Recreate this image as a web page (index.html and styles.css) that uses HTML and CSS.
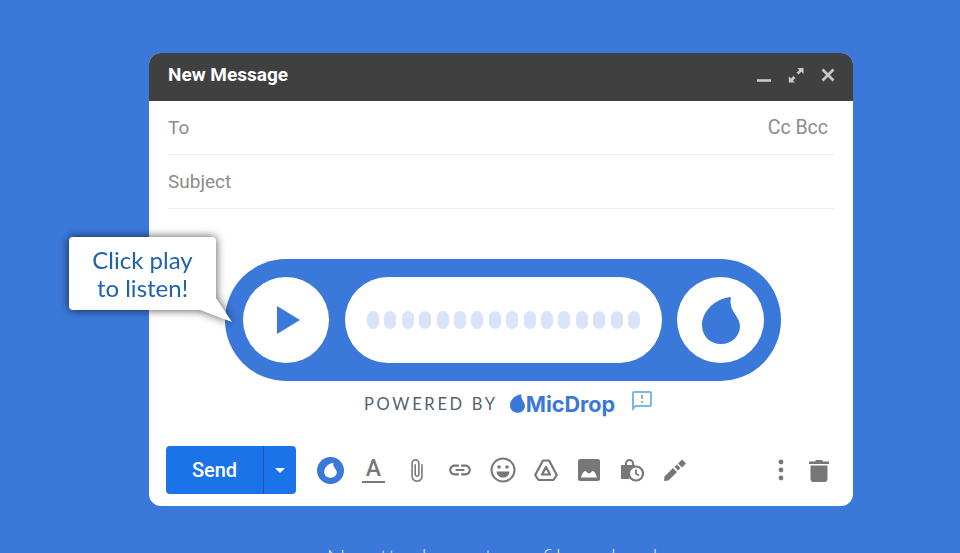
FILE: index.html
```html
<!DOCTYPE html>
<html lang="en">
<head>
  <meta charset="UTF-8" />
  <meta name="viewport" content="width=device-width, initial-scale=1.0"/>
  <title>MicDrop voice message</title>
  <link rel="stylesheet" href="styles.css">
</head>
<body>
  <div class="compose">
    <div class="compose-header">
      <strong class="compose-title">New Message</strong>
      <div class="window-buttons">
        <svg class="window-icon" viewBox="0 0 16 16"><path d="M1 13.500h14" stroke-width="2.600"/></svg>
        <svg class="window-icon" viewBox="0 0 16 16"><path class="filled" d="M9.500 1H15.500V7L13.300 4.800 10.500 7.600 8.500 5.600 11.300 3.200zM7 15.500H.8V9.300L3 11.500 5.500 9 7.500 11 5 13.500z"/></svg>
        <svg class="window-icon" viewBox="0 0 16 16"><path d="M2.500 2.500L13.500 13.500M13.500 2.500L2.500 13.500" stroke-width="2.600"/></svg>
      </div>
    </div>

    <div class="field">
      <span>To</span>
      <span class="field-right">Cc Bcc</span>
    </div>
    <div class="field">
      <span>Subject</span>
    </div>

    <div class="player">
      <div class="bubble">
        Click play<br>to listen!
        <svg class="bubble-tail" viewBox="0 0 40 32"><polygon points="4,16 20,4 36,28"/></svg>
      </div>
      <div class="player-circle">
        <svg class="play-icon" viewBox="0 0 23 28"><polygon points="0,0 23,14 0,28"/></svg>
      </div>
      <div class="wave">
        <i></i><i></i><i></i><i></i><i></i><i></i><i></i><i></i>
        <i></i><i></i><i></i><i></i><i></i><i></i><i></i><i></i>
      </div>
      <div class="player-circle player-circle-end">
        <svg class="drop-icon" viewBox="0 0 38 47"><path d="M29 0C11 2 0 16 0 28C0 39 8 47 19 47C30 47 38 39 38 29C38 19 26 14 29 0Z"/></svg>
      </div>
    </div>

    <div class="powered">
      <span class="powered-text">POWERED BY</span>
      <span class="brand">
        <svg class="brand-drop" viewBox="0 0 38 47"><path d="M29 0C11 2 0 16 0 28C0 39 8 47 19 47C30 47 38 39 38 29C38 19 26 14 29 0Z"/></svg>
        MicDrop
      </span>
      <svg class="feedback" viewBox="0 0 24 24"><path d="M20 2H4c-1.100 0-2 .9-2 2v18l4-4h14c1.100 0 2-.9 2-2V4c0-1.100-.9-2-2-2zm0 14H5.170L4 17.170V4h16v12zM11 12h2v2h-2zm0-6h2v4h-2z"/></svg>
    </div>

    <div class="toolbar">
      <div class="send-button">
        <span class="send-label">Send</span>
        <span class="send-more"><i class="caret"></i></span>
      </div>
      <div class="tools">
        <span class="tool">
          <svg class="icon-drop" viewBox="0 0 28 28"><circle cx="14" cy="14" r="14" fill="#3a78d9"/><path fill="#fff" d="M17 6C11 7 7.500 11.500 7.500 15.500C7.500 19 10.200 21.500 14 21.500C17.800 21.500 20.500 19 20.500 15.800C20.500 12.500 16 11 17 6Z"/></svg>
        </span>
        <span class="tool"><span class="text-color">A</span></span>
        <span class="tool">
          <svg viewBox="0 0 24 24"><path d="M16.500 6v11.500c0 2.210-1.790 4-4 4s-4-1.790-4-4V5c0-1.380 1.120-2.500 2.500-2.500s2.500 1.120 2.500 2.500v10.500c0 .55-.45 1-1 1s-1-.45-1-1V6H10v9.500c0 1.380 1.120 2.500 2.500 2.500s2.500-1.120 2.500-2.500V5c0-2.210-1.790-4-4-4S7 2.790 7 5v12.500c0 3.040 2.460 5.500 5.500 5.500s5.500-2.460 5.500-5.500V6h-1.500z"/></svg>
        </span>
        <span class="tool">
          <svg class="icon-wide" viewBox="0 0 24 24"><path d="M3.900 12c0-1.710 1.390-3.100 3.100-3.100h4V7H7c-2.760 0-5 2.240-5 5s2.240 5 5 5h4v-1.900H7c-1.710 0-3.100-1.390-3.100-3.100zM8 13h8v-2H8v2zm9-6h-4v1.900h4c1.710 0 3.100 1.390 3.100 3.100s-1.390 3.100-3.100 3.100h-4V17h4c2.760 0 5-2.240 5-5s-2.240-5-5-5z"/></svg>
        </span>
        <span class="tool">
          <svg class="icon-wide" viewBox="0 0 26 26"><circle cx="13" cy="13" r="11.500" class="line" stroke-width="2"/><circle cx="9" cy="10" r="1.800"/><circle cx="17" cy="10" r="1.800"/><path d="M6.500 14.500H19.500C19 18.500 16.500 20.500 13 20.500C9.500 20.500 7 18.500 6.500 14.500Z"/></svg>
        </span>
        <span class="tool">
          <svg class="icon-mid" viewBox="0 0 24 24"><polygon class="line" stroke-width="2.200" points="9,2.500 15,2.500 22.800,17 19.500,22 4.500,22 1.200,17"/><polygon class="line" stroke-width="2.200" points="12,9 16,16.500 8,16.500"/></svg>
        </span>
        <span class="tool">
          <svg class="icon-mid" viewBox="0 0 24 24"><path fill-rule="evenodd" d="M3 1H21C22 1 23 2 23 3V21C23 22 22 23 21 23H3C2 23 1 22 1 21V3C1 2 2 1 3 1ZM4 19.500H20C19.500 17 18 14 16 13C14.500 13 14 15 12 15.500C10 15 9.500 13 8 13C6 14 4.500 17 4 19.500Z"/></svg>
        </span>
        <span class="tool">
          <svg class="icon-mid" viewBox="0 0 24 24"><path fill-rule="evenodd" d="M5 7V5.500C5 2.800 7 1 9.500 1S14 2.800 14 5.500V7H15V8.500C11 9.500 8.500 12.500 9 21H2C1.400 21 1 20.600 1 20V8C1 7.400 1.400 7 2 7ZM7 7H12V5.500C12 4 11 3 9.500 3S7 4 7 5.500Z"/><circle cx="16" cy="15.500" r="7" fill="#fff" stroke="#777" stroke-width="2.200"/><path class="line" stroke-width="1.800" d="M16 11.500V15.800L19 17.500"/></svg>
        </span>
        <span class="tool">
          <svg class="icon-mid" viewBox="0 0 24 24"><path d="M1 23L1.500 18.500 10 10 14 14 5.500 22.500Z"/><path d="M11.500 9L14 6.500 17.500 10 15 12.500Z"/><path d="M15 5.500L19 1.500 23 5.500 19 9.500Z"/></svg>
        </span>
      </div>
      <div class="tools-right">
        <svg class="more" viewBox="0 0 6 22"><circle cx="3" cy="3" r="2.400"/><circle cx="3" cy="11" r="2.400"/><circle cx="3" cy="19" r="2.400"/></svg>
        <svg class="trash" viewBox="0 0 20 23"><path d="M1.500 6.500H18.500V20C18.500 21.500 17.500 23 16 23H4C2.500 23 1.500 21.500 1.500 20Z"/><path d="M0 2.500H6L7 1H13L14 2.500H20V5H0Z"/></svg>
      </div>
    </div>
  </div>

  <p class="caption">No attachments or file uploads</p>
</body>
</html>
```

FILE: styles.css
```css
* {
  margin: 0;
  padding: 0;
  box-sizing: border-box;
}

body {
  background: #3a78d9;
  height: 553px;
  overflow: hidden;
  padding: 53px 0 0 149px;
  font-family: Roboto, sans-serif;
}

.compose {
  width: 704px;
  height: 453px;
  background: #fff;
  border-radius: 12px;
}

.compose-header {
  height: 48px;
  background: #404040;
  border-radius: 12px 12px 0 0;
  display: flex;
  align-items: center;
  justify-content: space-between;
  padding: 0 17px 5px 19px;
}

.compose-title {
  color: #fff;
  font-size: 19px;
  font-weight: 700;
}

.window-buttons {
  display: flex;
  gap: 16px;
}

.window-icon {
  width: 16px;
  height: 16px;
  fill: none;
  stroke: #c9c9c9;
}

.window-icon .filled {
  fill: #c9c9c9;
  stroke: none;
}

.field {
  height: 54px;
  margin: 0 19px;
  border-bottom: 1px solid #eee;
  display: flex;
  align-items: center;
  justify-content: space-between;
  padding-right: 6px;
  color: #8c8c8c;
  font-size: 19px;
}

.field-right {
  font-size: 19.500px;
}

.player {
  position: relative;
  width: 556px;
  height: 122px;
  margin: 50px 0 0 76px;
  background: #3a78d9;
  border-radius: 61px;
  display: flex;
  align-items: center;
  gap: 16px;
  padding: 0 17px 0 18px;
}

.player-circle {
  width: 86px;
  height: 86px;
  flex: none;
  background: #fff;
  border-radius: 50%;
  display: flex;
  align-items: center;
  justify-content: center;
}

.player-circle-end {
  width: 87px;
  margin-left: -1px;
}

.play-icon {
  width: 23px;
  height: 28px;
  margin-left: 5px;
  fill: #3a78d9;
}

.drop-icon {
  width: 38px;
  height: 47px;
  fill: #3a78d9;
}

.wave {
  flex: 1;
  height: 86px;
  background: #fff;
  border-radius: 43px;
  display: flex;
  align-items: center;
  justify-content: center;
  gap: 5.400px;
}

.wave i {
  width: 12px;
  height: 18px;
  background: #d8e4f7;
  border-radius: 6px;
}

.bubble {
  position: absolute;
  left: -156px;
  top: -22px;
  width: 147px;
  height: 73px;
  background: #fff;
  border-radius: 4px;
  filter: drop-shadow(0 0 5px rgba(0, 0, 0, 0.7));
  color: #1f62ad;
  font-family: Lato, sans-serif;
  font-size: 24px;
  line-height: 28px;
  text-align: center;
  padding-top: 9px;
}

.bubble-tail {
  position: absolute;
  left: 127px;
  top: 57px;
  width: 40px;
  height: 32px;
  fill: #fff;
}

.powered {
  height: 42px;
  display: flex;
  align-items: center;
  padding: 3px 0 0 215px;
}

.powered-text {
  color: #555f6e;
  font-family: Lato, sans-serif;
  font-size: 16.500px;
  letter-spacing: 2.700px;
  margin-right: 12px;
}

.brand {
  display: flex;
  align-items: center;
  gap: 1px;
  color: #3a78d9;
  font-family: Inter, sans-serif;
  font-size: 21.600px;
  font-weight: 700;
  margin-right: 15px;
}

.brand-drop {
  width: 15px;
  height: 19px;
  fill: #3a78d9;
}

.feedback {
  width: 24px;
  height: 24px;
  margin-top: -6px;
  fill: #7ab8e8;
}

.toolbar {
  margin: 23px 0 0 17px;
  height: 48px;
  display: flex;
  align-items: center;
}

.send-button {
  width: 130px;
  height: 48px;
  background: #1a73e8;
  border-radius: 4px;
  display: flex;
  color: #fff;
}

.send-label {
  width: 98px;
  display: flex;
  align-items: center;
  justify-content: center;
  font-size: 20px;
  font-weight: 500;
  border-right: 1px solid #1559b5;
}

.send-more {
  flex: 1;
  display: flex;
  align-items: center;
  justify-content: center;
}

.caret {
  border-left: 5.500px solid transparent;
  border-right: 5.500px solid transparent;
  border-top: 5.500px solid #fff;
}

.tools {
  display: flex;
  margin-left: 13px;
}

.tool {
  width: 43px;
  height: 30px;
  display: flex;
  align-items: center;
  justify-content: center;
}

.tool svg {
  width: 25px;
  height: 25px;
  fill: #777;
}

.tool svg.icon-drop {
  width: 27px;
  height: 27px;
}

.tool svg.icon-wide {
  width: 26px;
  height: 26px;
}

.tool svg.icon-mid {
  width: 24px;
  height: 24px;
}

.tool .line {
  fill: none;
  stroke: #777;
  stroke-linejoin: round;
}

.text-color {
  color: #777;
  font-size: 23px;
  font-weight: 500;
  line-height: 22px;
  width: 23px;
  text-align: center;
  border-bottom: 2px solid #777;
  padding-bottom: 1px;
}

.tools-right {
  display: flex;
  align-items: center;
  gap: 25px;
  margin-left: 82px;
}

.more {
  width: 6px;
  height: 22px;
  fill: #777;
}

.trash {
  width: 20px;
  height: 23px;
  fill: #777;
}

.caption {
  margin-top: 36px;
  margin-left: -149px;
  width: 995px;
  text-align: center;
  color: rgba(255, 255, 255, 0.75);
  font-family: Lato, sans-serif;
  font-size: 26px;
  font-weight: 300;
}
```
